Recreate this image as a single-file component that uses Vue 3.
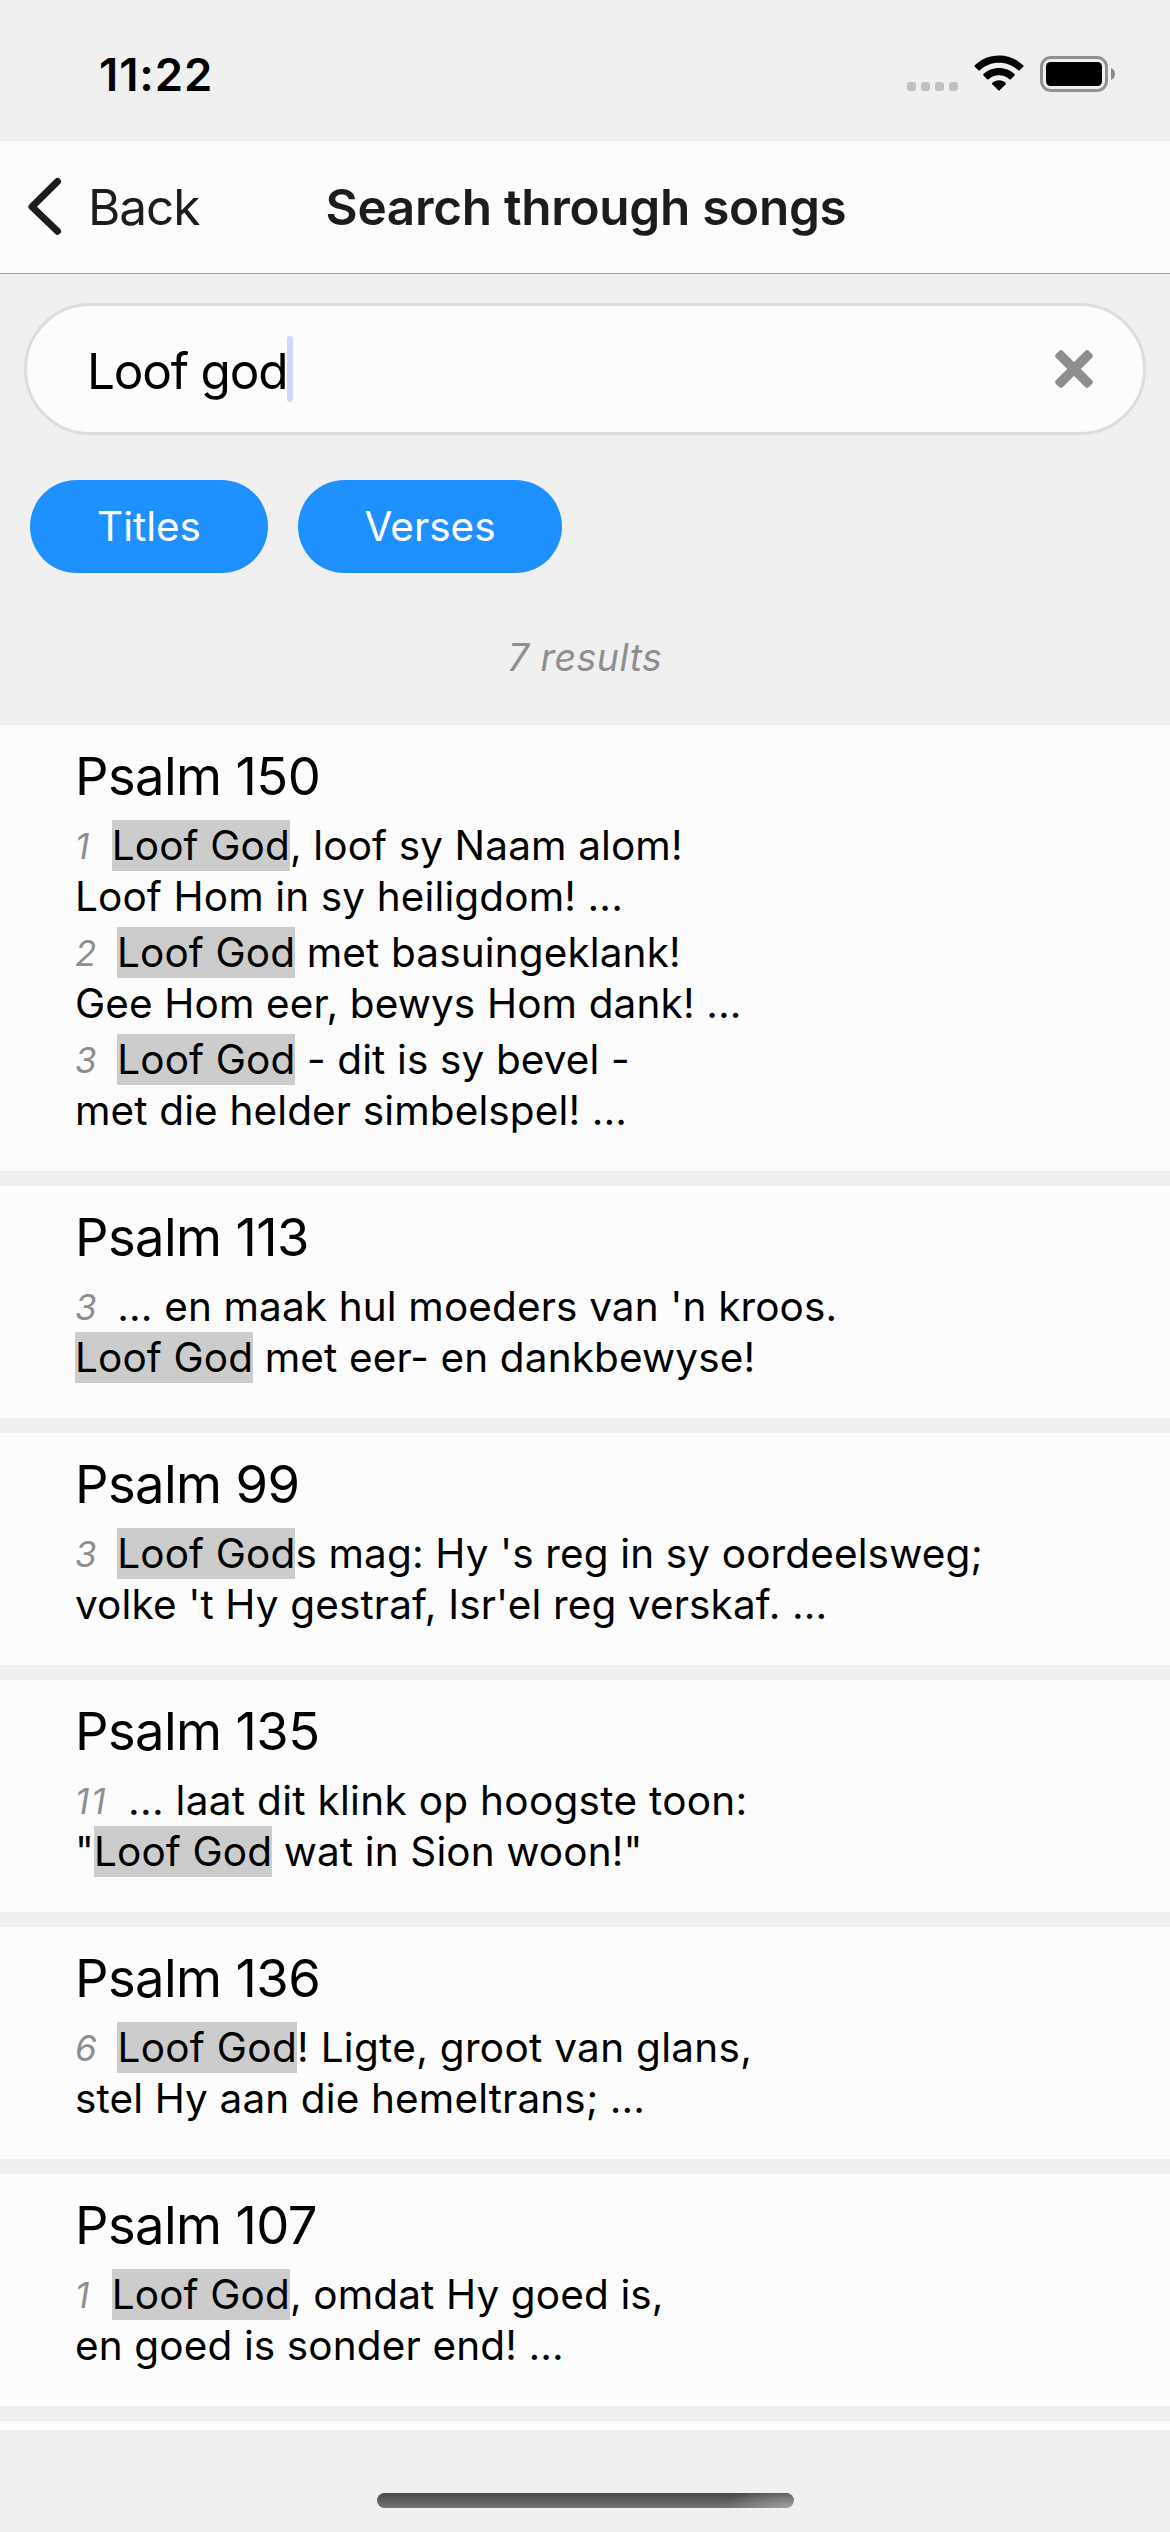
<script setup>
const results = [
  { title: 'Psalm 150', verses: [
    { n: '1', lines: [[['Loof God', 1], [', loof sy Naam alom!']], [['Loof Hom in sy heiligdom! ...']]] },
    { n: '2', lines: [[['Loof God', 1], [' met basuingeklank!']], [['Gee Hom eer, bewys Hom dank! ...']]] },
    { n: '3', lines: [[['Loof God', 1], [' - dit is sy bevel -']], [['met die helder simbelspel! ...']]] },
  ] },
  { title: 'Psalm 113', verses: [
    { n: '3', lines: [[["... en maak hul moeders van 'n kroos."]], [['Loof God', 1], [' met eer- en dankbewyse!']]] },
  ] },
  { title: 'Psalm 99', verses: [
    { n: '3', lines: [[['Loof God', 1], ["s mag: Hy 's reg in sy oordeelsweg;"]], [["volke 't Hy gestraf, Isr'el reg verskaf. ..."]]] },
  ] },
  { title: 'Psalm 135', verses: [
    { n: '11', wide: true, lines: [[['... laat dit klink op hoogste toon:']], [['"'], ['Loof God', 1], [' wat in Sion woon!"']]] },
  ] },
  { title: 'Psalm 136', verses: [
    { n: '6', wide: true, lines: [[['Loof God', 1], ['! Ligte, groot van glans,']], [['stel Hy aan die hemeltrans; ...']]] },
  ] },
  { title: 'Psalm 107', verses: [
    { n: '1', lines: [[['Loof God', 1], [', omdat Hy goed is,']], [['en goed is sonder end! ...']]] },
  ] },
  { title: '', verses: [] },
]
</script>

<template>
  <div class="screen">
    <div class="status">
      <span class="time">11:22</span>
      <div class="indicators">
        <div class="dots"><i></i><i></i><i></i><i></i></div>
        <svg class="wifi" width="50" height="38" viewBox="0 0 50 38">
          <path d="M25 0.5C34.5 0.5 43 4.200 49.200 10.300C49.700 10.800 49.700 11.300 49.200 11.800L45.600 15.300C45.100 15.800 44.600 15.800 44.100 15.300C38.900 10.400 32.300 7.800 25 7.800S11.100 10.400 5.900 15.300C5.400 15.800 4.900 15.800 4.400 15.300L0.800 11.800C0.300 11.300 0.300 10.800 0.800 10.300C7 4.200 15.500 0.500 25 0.500Z" />
          <path d="M25 13C31 13 36.400 15.300 40.500 19.100C41 19.600 41 20.100 40.500 20.600L36.900 24.200C36.400 24.700 35.900 24.700 35.400 24.200C32.600 21.700 29 20.200 25 20.200S17.400 21.700 14.600 24.200C14.100 24.700 13.600 24.700 13.100 24.200L9.500 20.600C9 20.100 9 19.600 9.500 19.100C13.600 15.300 19 13 25 13Z" />
          <path d="M25 25.300C27.500 25.300 29.900 26.200 31.700 27.800C32.200 28.300 32.200 28.800 31.700 29.300L25.700 35.300C25.200 35.800 24.800 35.800 24.300 35.300L18.300 29.300C17.800 28.800 17.800 28.300 18.300 27.800C20.100 26.200 22.500 25.300 25 25.300Z" />
        </svg>
        <svg class="battery" width="76" height="36" viewBox="0 0 76 36">
          <rect x="1.500" y="1.500" width="65" height="33" rx="9.500" fill="none" stroke="#929292" stroke-width="3" />
          <rect x="6" y="6" width="56" height="24" rx="4.500" />
          <path d="M71 12C73.400 13 75 15.200 75 18S73.400 23 71 24Z" fill="#8a8a8a" />
        </svg>
      </div>
    </div>

    <header class="nav">
      <div class="back">
        <svg width="36" height="60" viewBox="0 0 36 60"><path d="M31.500 4.500L6 29.700L31.500 54.200" /></svg>
        <span>Back</span>
      </div>
      <h1>Search through songs</h1>
    </header>

    <div class="search">
      <span class="query">Loof god</span><span class="caret"></span>
      <svg class="clear" width="38" height="38" viewBox="-19 -19 38 38">
        <rect x="-23.300" y="-4.900" width="46.600" height="9.800" rx="3" transform="rotate(45)" />
        <rect x="-23.300" y="-4.900" width="46.600" height="9.800" rx="3" transform="rotate(-45)" />
      </svg>
    </div>

    <div class="chips">
      <button class="chip titles">Titles</button>
      <button class="chip verses">Verses</button>
    </div>

    <div class="count">7 results</div>

    <main class="list">
      <article v-for="r in results" :key="r.title" class="card">
        <h2>{{ r.title }}</h2>
        <div v-for="v in r.verses" :key="v.n" class="verse">
          <div v-for="(line, i) in v.lines" :key="i" class="line" :class="{ wide: v.wide && i === 0 }"><span v-if="i === 0" class="num" :class="{ ones: v.n[0] === '1' }">{{ v.n }}</span><span v-for="(p, j) in line" :key="j" :class="{ hit: p[1] }">{{ p[0] }}</span></div>
        </div>
      </article>
    </main>

    <footer class="home"><div class="bar"></div></footer>
  </div>
</template>

<style>
body { margin: 0; background: #f0f0f0; }
</style>

<style scoped>
.screen {
  width: 1170px;
  height: 2532px;
  display: flex;
  flex-direction: column;
  overflow: hidden;
  background: #f0f0f0;
  color: #000;
  font-family: Inter, "Liberation Sans", sans-serif;
}
.status {
  flex: none;
  height: 141px;
  box-sizing: border-box;
  padding: 0 54px 0 99px;
  display: flex;
  justify-content: space-between;
}
.time { font-size: 45.500px; font-weight: 600; line-height: 54px; margin-top: 48px; letter-spacing: 0.900px; }
.indicators { display: flex; align-items: flex-start; }
.dots { display: flex; gap: 5px; margin: 82px 16px 0 0; }
.dots i { width: 9px; height: 9px; border-radius: 3px; background: #c0c0c0; }
.wifi { margin: 55px 16px 0 0; }
.battery { margin-top: 56px; }
.nav {
  flex: none;
  height: 133px;
  box-sizing: border-box;
  border-bottom: 1px solid #a9a9a9;
  background: #fcfcfc;
  color: #1c1c1e;
  display: grid;
  grid-template-columns: 1fr auto 1fr;
  align-items: center;
}
.back { display: flex; align-items: center; padding-left: 26px; gap: 26px; font-size: 49.500px; line-height: 60px; letter-spacing: -1.100px; }
.back path { fill: none; stroke: #1c1c1c; stroke-width: 7; stroke-linecap: round; stroke-linejoin: round; }
h1 { margin: 0; font-size: 49.500px; font-weight: 600; line-height: 60px; white-space: nowrap; letter-spacing: -0.300px; padding-left: 2px; }
.search {
  flex: none;
  height: 132px;
  margin: 29px 24px 0;
  box-sizing: border-box;
  border: 3px solid #ddd;
  border-radius: 66px;
  background: #fcfcfc;
  display: flex;
  align-items: center;
  padding: 0 50px 0 60px;
}
.query { font-size: 49.500px; line-height: 60px; margin-top: 4px; letter-spacing: -1.200px; }
.caret { width: 6px; height: 66px; border-radius: 3px; background: #d0d8fa; }
.clear { margin-left: auto; fill: #8e8e8e; overflow: visible; }
.chips { flex: none; display: flex; gap: 30px; padding: 45px 30px 0; }
.chip {
  height: 93px;
  padding: 0;
  border: 0;
  border-radius: 46.500px;
  background: #1e90ff;
  color: #fff;
  font-family: inherit;
  font-size: 40.500px;
}
.titles { width: 238px; }
.verses { width: 264px; }
.count { flex: none; margin-top: 61px; height: 91px; line-height: 48px; text-align: center; font-size: 37.500px; font-style: italic; color: #8e8e8e; letter-spacing: 0.500px; }
.list { height: 1705px; flex: none; overflow: hidden; display: flex; flex-direction: column; gap: 15px; }
.card { flex: none; background: #fcfcfc; padding: 18px 75px 35px; }
h2 { margin: 0; height: 77px; font-size: 52.500px; line-height: 66px; font-weight: 400; letter-spacing: -0.600px; }
.verse + .verse { margin-top: 5px; }
.line { height: 51px; line-height: 51px; font-size: 40.500px; white-space: pre; display: flex; letter-spacing: 0.130px; }
.wide { letter-spacing: 0.300px; }
.num { font-size: 35px; font-style: italic; color: #8e8e8e; margin-right: 20.500px; padding-top: 1px; }
.ones { letter-spacing: 2px; }
.hit { background: #ccc; }
.home { flex: none; height: 102px; display: flex; justify-content: center; align-items: flex-start; }
.bar {
  width: 417px;
  height: 15px;
  margin-top: 63px;
  border-radius: 7.500px;
  background:
    radial-gradient(ellipse 70px 22px at 100% 100%, rgba(170, 170, 170, 0.8), rgba(170, 170, 170, 0)),
    linear-gradient(#484848, #747474);
}
</style>
